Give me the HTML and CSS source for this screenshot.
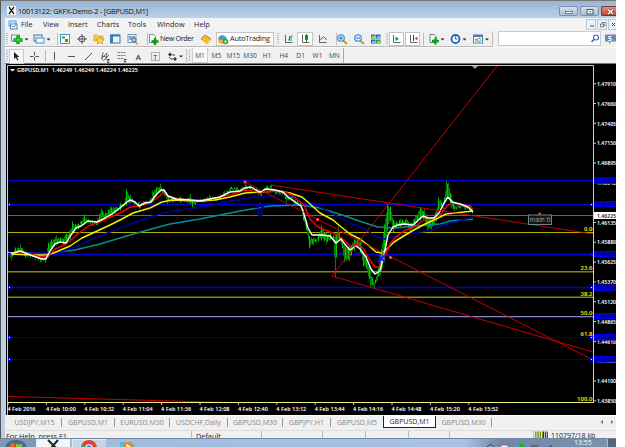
FILE: index.html
```html
<!DOCTYPE html>
<html lang="en">
<head>
    <meta charset="UTF-8">
    <title>10013122: GKFX-Demo-2 - [GBPUSD,M1]</title>
    <link rel="stylesheet" href="styles.css">
</head>
<body>
<div class="screen">
    <div class="window">
        <div class="titlebar">
            <svg class="app-icon" width="9" height="9" viewBox="0 0 9 9"><rect width="9" height="9" fill="#f4f6f8"/><path d="M2 1L7 8M7 1L2 8" stroke="#222" stroke-width="1.3"/></svg>
            <span class="title">10013122: GKFX-Demo-2 - [GBPUSD,M1]</span>
            <div class="win-buttons">
                <span class="wb"><svg width="17" height="9"><rect x="5.5" y="4.500" width="7" height="2" fill="#fff" stroke="#566" stroke-width=".8"/></svg></span>
                <span class="wb"><svg width="17" height="9"><rect x="6" y="2.500" width="6" height="4.500" fill="#fff" stroke="#456" /><path d="M8 4.700h2" stroke="#456"/></svg></span>
                <span class="wb close"><svg width="15" height="9"><path d="M6 2.500l5 4.500M11 2.500L6 7" stroke="#544" stroke-width="2.600"/><path d="M6 2.500l5 4.500M11 2.500L6 7" stroke="#fff" stroke-width="1.500"/></svg></span>
            </div>
        </div>

        <div class="menubar">
            <svg class="menu-icon" width="10" height="10" viewBox="0 0 10 10"><rect x="1" y="1" width="7" height="5" fill="#cfe6f8" stroke="#5c9fd0"/><rect x="2.500" y="4" width="6.500" height="5" fill="#e8f4fc" stroke="#4a90c8"/><path d="M4 7l1-1 1 1 2-2" stroke="#37a" fill="none" stroke-width=".7"/></svg>
            <span class="m-file">File</span><span class="m-view">View</span><span class="m-insert">Insert</span><span class="m-charts">Charts</span><span class="m-tools">Tools</span><span class="m-window">Window</span><span class="m-help">Help</span>
            <div class="mdi">
                <span><svg width="9" height="9"><path d="M3 6h4" stroke="#456"/></svg></span>
                <span><svg width="9" height="9"><path d="M4 3.500v-1h3v3h-1M2.500 4h3v3h-3z" stroke="#567" fill="none" stroke-width=".8"/></svg></span>
                <span><svg width="9" height="9"><path d="M3 3l3 3M6 3L3 6" stroke="#345"/></svg></span>
            </div>
        </div>

        <div class="toolbar">
            <!-- standard toolbar -->
            <svg width="492" height="16" viewBox="5 31 492 16" class="tools">
                <path d="M5 46.500h487.500v-15" fill="none" stroke="#bbb"/>
                <g stroke="#aaa" stroke-width="1.500" stroke-dasharray="1 1"><path d="M7 33v12M278 33v12M387 33v12"/></g>
                <path d="M57.500 33v12M147.500 33v12M336.500 33v12M423.500 33v12" stroke="#bbb"/>
                <g fill="#fff" stroke="#c4c4c4"><rect x="216.500" y="32.500" width="57" height="13"/><rect x="297.500" y="32.500" width="15" height="13"/><rect x="389.500" y="32.500" width="14" height="13"/><rect x="405.500" y="32.500" width="14" height="13"/></g>
                <path d="M24.500 38.500h4l-2 2zM46.500 38.500h4l-2 2zM440.500 38.500h4l-2 2zM462.500 38.500h4l-2 2zM485 38.500h4l-2 2z" fill="#222"/>
                <!-- new chart -->
                <rect x="11.500" y="35" width="8" height="6" fill="#e4f0fa" stroke="#688fb0"/><path d="M18 35.500v8.500M13.500 40h9" stroke="#0a8a1a" stroke-width="3.400"/><path d="M18 36.500v6.500M14.500 40h7" stroke="#22d42c" stroke-width="1.800"/>
                <!-- profiles -->
                <rect x="34" y="35" width="8" height="6" fill="#dcecf9" stroke="#3a7ab8"/><rect x="36" y="38" width="8" height="5" fill="#f5faff" stroke="#4a8ac8"/>
                <!-- market watch -->
                <rect x="60.500" y="34.500" width="9" height="9" fill="#f7fbff" stroke="#4593d0"/><path d="M62 36.500h3v2h-3z" fill="#2a2"/><path d="M65 39h3v3h-3z" fill="#e43"/>
                <!-- data window -->
                <g stroke="#555" fill="none"><circle cx="82" cy="39" r="3"/><path d="M82 34v10M77 39h10"/></g>
                <!-- navigator -->
                <path d="M94 35h3l1 1h5v5h-9z" fill="#f4ce57" stroke="#c89826" stroke-width=".7"/><path d="M100 36.500l1.200 2.500 3 .2-2.200 2 .7 2.800-2.700-1.500-2.700 1.500.7-2.800-2.200-2 3-.2z" fill="#ffe03a" stroke="#b87f10" stroke-width=".6"/>
                <!-- terminal, tester -->
                <rect x="110.500" y="35" width="9.500" height="8" fill="#e8f3fc" stroke="#3a7ab8"/><path d="M111 35.500h9M112 36v7" stroke="#3a7ab8" stroke-width="2"/>
                <rect x="128" y="34.500" width="8" height="8" fill="#eaf4fc" stroke="#6a96bc"/><path d="M130 36v4M132 36v4M134 36v4" stroke="#458"/><circle cx="134" cy="40" r="2" fill="#bfe0f6" stroke="#458"/><path d="M135 42l3 2.500" stroke="#c93" stroke-width="1.500"/>
                <!-- new order -->
                <path d="M149.500 34.500h4l2 2v6h-6z" fill="#fff" stroke="#888"/><path d="M155 38v7M151.500 41.500h7" stroke="#0a9a1a" stroke-width="2.500"/>
                <text x="160" y="41.300" class="tb" textLength="34">New Order</text>
                <path d="M201 39l4-4 6 4-4 5z" fill="#f3bb2f" stroke="#a9700c" stroke-width=".8"/><path d="M201.500 40l5 4 4-4.500" fill="none" stroke="#fff0a0"/>
                <!-- autotrading -->
                <circle cx="222" cy="40" r="4" fill="#e5b83c"/><path d="M218 38q4-6 9 0l-2 2h-5z" fill="#4a9bd0"/><circle cx="225.500" cy="41.500" r="2.800" fill="#20b030"/><path d="M224.700 40v3l2.300-1.500z" fill="#fff"/>
                <text x="230" y="41.300" class="tb" textLength="40">AutoTrading</text>
                <!-- chart types -->
                <g stroke="#555" fill="none" stroke-width=".9"><path d="M285.500 35v7.500h7M302.500 34.500v8h7M319.500 35v7.500h7M393.500 35v7.500h7M410.500 35v7.500h7"/></g>
                <g stroke="#16942a" fill="none"><path d="M288 40h1.500v-4M291 41v-5h1.500M320.500 40q3-6 6 0"/><path d="M306.500 34v8" /><path d="M306.500 35v5" stroke-width="3"/></g>
                <!-- zoom and tile -->
                <path d="M343.500 41l3.500 3M360.500 41l3.500 3" stroke="#c99c27" stroke-width="2"/><g fill="#d9efff" stroke="#3187c8" stroke-width="1.100"><circle cx="341" cy="38" r="3.300"/><circle cx="358" cy="38" r="3.300"/></g><path d="M339 38h4M341 36v4M356 38h4" stroke="#2570b0"/>
                <path d="M371 34.500h4.500v4H371zM376 39.500h4.500v4H376z" fill="#2a9b2a"/><path d="M376 34.500h4.500v4H376zM371 39.500h4.500v4H371z" fill="#2b65cc"/><path d="M372 37h3M377 37h3M372 42h3M377 42h3" stroke="#fff"/>
                <path d="M395.500 36.500v4.500l3.500-2.200z" fill="#16a030"/><path d="M413.500 35v6" stroke="#246"/><path d="M417.500 36.500l-3 2 3 2z" fill="#d44a1c"/>
                <!-- indicators, periods, templates -->
                <path d="M430 34.500h4l2 2v6h-6z" fill="#fff" stroke="#777"/><path d="M435.500 37.500v7M432 41h7" stroke="#0ca01c" stroke-width="2.300"/>
                <circle cx="455.500" cy="39" r="4" fill="#f5fbff" stroke="#1767bb" stroke-width="1.800"/><path d="M455.500 36.500V39h2" stroke="#333" fill="none" stroke-width=".8"/>
                <rect x="473.500" y="35" width="9" height="8" fill="#f7fbff" stroke="#3c83bd"/><path d="M473.500 36h9" stroke="#3c83bd" stroke-width="2"/><path d="M475 39l2 1 2-2 2 1" stroke="#c33" fill="none" stroke-width=".8"/><path d="M475 41.500l2-1 2 1 2-1" stroke="#292" fill="none" stroke-width=".8"/>
            </svg>
            <div class="search"><svg width="10" height="10"><circle cx="6" cy="3.500" r="2.500" fill="#fff" stroke="#3464c8" stroke-width="1.100"/><path d="M4 5.500L1.500 8" stroke="#3464c8" stroke-width="1.600"/></svg></div>
            <div class="chat"><svg width="11" height="12"><path d="M0 1.500h11v7H6l-2 2.500v-2.500H0z" fill="#7085b5"/><text x="3" y="8" fill="#fff" font-size="7" font-weight="bold">5</text></svg></div>
        </div>

        <div class="toolbar second">
            <!-- line studies -->
            <svg width="187" height="16" viewBox="5 47 187 16">
                <path d="M7 49v12M189.500 49v12" stroke="#aaa" stroke-width="1.500" stroke-dasharray="1 1"/>
                <path d="M45.500 49v12M186.500 48v15" stroke="#bbb"/>
                <rect x="9.500" y="48.500" width="14" height="14" fill="#f8f8f8" stroke="#ccc"/>
                <path d="M14 51v7l1.800-1.500 1.400 3 1.200-.6-1.400-2.800h2.400z" fill="#222"/>
                <g stroke="#555" fill="none"><path d="M34.500 51v3.500M34.500 56v3.500M30 55.500h3.500M35.500 55.500h3.500M54.500 51v8M68 55.500h7M85 59l7-7"/><path d="M101 58l6-6M103 60l6-6M101 55l6 1M103 51l-1 8M107 52l-1 7" stroke-width=".8"/><path d="M117.500 51.500h8M117.500 54.500h8M117.500 57.500h6" stroke-dasharray="1 .7"/></g>
                <text x="107" y="61.500" font-size="4.500" font-weight="bold">E</text><text x="124" y="61.500" font-size="4.500" font-weight="bold">F</text>
                <text x="135.800" y="58.500" font-size="8" fill="#333" stroke="#333" stroke-width=".2">A</text>
                <rect x="151.500" y="51.500" width="8" height="8" fill="none" stroke="#777" stroke-dasharray="1 1"/><text x="153.200" y="58.500" font-size="7" fill="#333">T</text>
                <path d="M168 53.500l2-2 2 2-2 2zM173 58l2-2 2 2-2 2z" fill="#333"/><path d="M172 54h3M169 56l2 2h2" stroke="#444" fill="none"/>
                <path d="M179 54.500h4l-2 2z" fill="#222"/>
            </svg>
            <div class="periods">
                <span class="on">M1</span><span>M5</span><span>M15</span><span>M30</span><span>H1</span><span>H4</span><span>D1</span><span>W1</span><span>MN</span>
            </div>
        </div>

        <svg id="chart" width="610" height="351" viewBox="6 64 610 351">
            <rect x="6" y="64" width="610" height="351" fill="#000"/>
            <path d="M7.500 415V65.500H593.500V403" stroke="#c8ccd0" fill="none"/>
            <!-- horizontal levels -->
            <path d="M8 232.500H593" stroke="#b8b000"/>
            <path d="M8 271.800H593M8 297.200H593" stroke="#8a8400" stroke-width="1.500"/>
            <path d="M8 316.600H593" stroke="#8585cd" stroke-width="1.300"/>
            <path d="M8 337.500H593M8 359.500H593" stroke="#000078"/>
            <path d="M8 215.500H593" stroke="#5b6676"/>
            <g stroke="#0000d0" stroke-width="1.300"><path d="M8 180.500H593M8 204.500H593M8 287.500H593"/><path d="M8 254.300H593" stroke-width="1.700"/></g>
            <g id="candles"></g>
            <g fill="none" stroke-width="1.400" stroke-linejoin="round">
                <polyline stroke="#009090" points="8,253 50,253 75,250 100,244 130,235 155,228 170,224 200,219 240,211 270,206 300,205 320,208 345,216 365,223 378,227 395,228 415,226 440,224 450,221 473,219"/>
                <polyline stroke="#0000a0" points="8,254 60,252 75,247 90,240 110,232 130,224 150,217 163,213 180,210 209,206 230,201 255,197 280,195 300,197 320,207 335,215 350,223 365,229 375,236 385,239 395,236 410,233 430,231 445,225 473,217"/>
                <polyline stroke="#f4f000" stroke-width="1.500" points="8,254 35,255 48,255 56,252 70,246 82,238 95,232 110,225 122,219 133,213 150,208 162,202 172,200 200,201 215,200 230,197 245,193 260,192 278,191 290,193 302,197 310,204 320,213 333,220 340,226 350,234 360,239 368,245 376,252 382,253 388,248 394,242 402,237 412,231 425,224 436,219 446,214 455,213 473,211"/>
                <polyline stroke="#f00000" stroke-width="1.500" points="8,254 20,252 30,254 40,257 48,256 55,249 62,246 70,241 80,232 90,225 100,222 110,217 120,213 130,207 140,206 150,203 157,198 163,193 170,197 178,199 195,200 205,200 215,198 230,195 245,190 260,192 275,191 285,192 292,195 298,200 304,205 310,219 318,227 330,232 338,235 344,240 350,246 357,244 363,248 369,259 375,267 380,267 384,258 390,244 396,237 404,231 414,227 424,220 432,219 440,215 447,206 452,203 460,204 470,206 473,209"/>
                <polyline stroke="#fff" points="8,253 14,253 20,251 28,254 36,257 42,259 46,259 50,251 55,244 60,242 66,243 71,235 76,228 81,226 88,221 97,222 105,218 112,214 120,208 127,202 130,200 135,202 139,206 145,203 151,202 156,195 161,190 164,190 168,196 176,199 190,200 200,201 210,199 220,197 230,192 240,191 245,188 251,187 256,190 260,192 266,189 275,190 283,192 288,197 295,202 301,206 304,214 308,228 312,235 322,235 330,236 336,243 341,239 344,243 350,250 356,246 360,249 366,257 371,269 375,274 380,271 385,250 388,235 393,227 398,225 404,224 413,225 423,216 428,218 434,218 439,213 444,203 448,197 452,202 460,204 468,207 473,212"/>
            </g>
            <!-- trend lines -->
            <g stroke="#dc0000" stroke-width=".9"><path d="M332 276L497 66M245 182L391 257L593 360M271 185L593 234M332 276L593 352M8 396.500L228 402.500" fill="none"/></g>
            <!-- objects -->
            <path d="M258.500 215.500v-8h-2.500l4-5 4 5h-2.500v8z" fill="none" stroke="#0000c0" stroke-width="1.300"/>
            <path d="M378 255l7 7M385 255l-7 7" stroke="#0020e8" stroke-width="2"/>
            <circle cx="359.500" cy="244.500" r="1.500" fill="none" stroke="#666"/>
            <g fill="#fff" stroke="#e02020"><rect x="244" y="181" width="2" height="2"/><rect x="316.500" y="218.500" width="2" height="2"/><rect x="389.500" y="256.500" width="2" height="2"/><rect x="539" y="213" width="1.500" height="1.500"/></g>
            <g id="handles" fill="#fff" stroke="#0000f0"></g>
            <rect x="528.500" y="215" width="23" height="9.500" fill="#10151a" stroke="#708090"/>
            <text x="529.500" y="222.300" fill="#9aa6b2" font-size="7.200" textLength="21" lengthAdjust="spacingAndGlyphs">main tl</text>
            <path d="M472 66h6l-3 3z" fill="#93a8bc"/>
            <path d="M8 402.500H593" stroke="#eeee80"/>
            <path d="M10 69h5l-2.500 2.500z" fill="#fff"/>
            <text x="17" y="72.300" class="axis" textLength="121" lengthAdjust="spacingAndGlyphs">GBPUSD,M1&#160; 1.46249 1.46249 1.46224 1.46225</text>
            <g class="fib" text-anchor="end"><text x="592.500" y="231">0.0</text><text x="592.500" y="270.300">23.6</text><text x="592.500" y="295.500">38.2</text><text x="592.500" y="315.300">50.0</text><text x="592.500" y="335.800">61.8</text><text x="592.500" y="401">100.0</text></g>
            <g id="prices" class="axis"></g>
            <g id="times" class="axis"></g>
        </svg>

        <div class="tabs">
            <span class="t1">USDJPY,M15</span><span class="t2">GBPUSD,M1</span><span class="t3">EURUSD,M30</span><span class="t4">USDCHF,Daily</span><span class="t5">GBPUSD,M30</span><span class="t6">GBPJPY,H1</span><span class="t7">GBPUSD,M5</span><span class="t8 active">GBPUSD,M1</span><span class="t9">GBPUSD,M30</span>
            <svg width="18" height="8" class="scroll"><path d="M5 2v4L2.500 4zM13 2v4l2.500-2z" fill="#777"/></svg>
        </div>

        <div class="status">
            <span class="help">For Help, press F1</span><span class="profile">Default</span><span class="c1"></span><span class="c2"></span><span class="c3"></span><span class="c4"></span><span class="c5"></span>
            <span class="conn"><svg width="15" height="7"><path d="M1 4h8" stroke="#7c9a26" stroke-width="7" stroke-dasharray="1.500 .8"/><path d="M9 4h5" stroke="#234" stroke-width="7" stroke-dasharray="1.200 .9"/></svg>110797/18 kb</span>
        </div>
    </div>

    <div class="taskbar">
        <div class="start"><svg width="36" height="9"><ellipse cx="16" cy="9" rx="11" ry="8" fill="#426d8c"/><path d="M10 5q3-2 5-.500v4h-5z" fill="#e8652c"/><path d="M16 4.500q3 1.500 6 .500v4h-6z" fill="#8ec33c"/></svg></div>
        <div class="task open"><svg width="16" height="9"><path d="M3 1l9 9M13 1L6 9" stroke="#222" stroke-width="2"/></svg></div>
        <div class="task"><svg width="18" height="9"><circle cx="9" cy="9" r="8" fill="#de4435"/><path d="M1 9a8 8 0 0 1 1-4l5 4z" fill="#3aa64c"/><circle cx="9" cy="9" r="3.800" fill="#fff"/><circle cx="9" cy="9" r="2.800" fill="#4285d4"/></svg></div>
        <svg class="player" width="16" height="9"><path d="M0 3h11l4 3v3H0z" fill="#65b2e4"/><circle cx="8" cy="8" r="5" fill="#ee8b20"/><path d="M6.500 5v4l4-1.500z" fill="#fff"/></svg>
        <div class="tray">
            <svg width="78" height="9"><path d="M3 8q4-5 7 0" stroke="#445" fill="none"/><path d="M17 6h7v3h-7z" fill="#fff" stroke="#a4559a"/><path d="M35 5h5v4h-5z" fill="#17b62a"/><path d="M47 7h7M47 8.500h7M65 8l2-2v3" stroke="#445" fill="none"/></svg>
            <span class="clock">13:55</span>
            <span class="desk"></span>
        </div>
    </div>
</div>
<script src="chart.js"></script>
</body>
</html>
```

FILE: styles.css
```css
body {
    margin: 0;
    background: #fff;
    font-family: "Open Sans", "Noto Sans", sans-serif;
    font-size: 7.3px;
    color: #222;
    overflow: hidden;
}
svg {
    display: block;
    flex-shrink: 0;
}
.screen {
    width: 616px;
    height: 447px;
    display: flex;
    flex-direction: column;
    overflow: hidden;
}
.window {
    height: 438px;
    box-sizing: border-box;
    border-top: 1px solid #777;
    border-left: 1px solid #555;
    padding-left: 4px;
    background: #b9d0e9;
    overflow: hidden;
}
.titlebar {
    height: 17px;
    margin-left: -4px;
    padding-left: 6px;
    display: flex;
    align-items: center;
    background: linear-gradient(#9ab4d2, #b9d1ea);
}
.app-icon {
    margin-top: 2px;
}
.title {
    margin: 3px 0 0 2px;
    font-size: 7.3px;
    letter-spacing: -0.2px;
    color: #111;
}
.win-buttons {
    display: flex;
    gap: 2px;
    margin-left: auto;
    align-self: flex-start;
    padding-top: 5px;
}
.wb {
    height: 8px;
    width: 17px;
    border: 1px solid #7b91a8;
    border-radius: 2px;
    background: linear-gradient(#d3e0ee, #a9bfd6);
    overflow: hidden;
}
.wb.close {
    width: 14px;
    border-color: #7c352b;
    border-right: 0;
    border-radius: 2px 0 0 2px;
    background: linear-gradient(#dc9283, #c4452c);
}
.menubar {
    height: 13px;
    display: flex;
    align-items: center;
    background: #f3f3f3;
    padding-left: 3px;
    color: #302030;
}
.menubar > span {
    line-height: 12px;
    height: 13px;
}
.menu-icon {
    margin-right: 3px;
}
.m-file { width: 22px; }
.m-view { width: 25px; }
.m-insert { width: 29px; }
.m-charts { width: 31px; }
.m-tools { width: 29px; }
.m-window { width: 37px; }
.mdi {
    margin-left: auto;
    display: flex;
    gap: 1px;
}
.mdi span {
    width: 8px;
    height: 9px;
    border: 1px solid #b6c8da;
    background: #eaf2fa;
    overflow: hidden;
}
.mdi span:last-child {
    width: 7px;
    border-right: 0;
}
.toolbar {
    height: 16px;
    display: flex;
    background: #f0f0f0;
}
.toolbar.second {
    height: 15px;
    border-top: 1px solid #fafafa;
    border-bottom: 1px solid #777;
}
.tb {
    font-size: 7.3px;
    fill: #201828;
}
.search {
    width: 102px;
    height: 13px;
    margin: 0 0 0 1px;
    border: 1px solid #ccc;
    background: #fff;
    display: flex;
    justify-content: flex-end;
    align-items: center;
}
.chat {
    padding: 2px 0 0 4px;
    overflow: hidden;
}
.periods {
    display: flex;
    border-right: 1px solid #aaa;
    color: #444;
    font-size: 6.6px;
}
.periods span {
    width: 16.85px;
    line-height: 15px;
    text-align: center;
}
.periods .on {
    width: 14px;
    border: 1px solid #ccc;
    border-top: 0;
    background: #f8f8f8;
}
#chart {
    margin-left: 1px;
}
.axis {
    fill: #fff;
    font-family: "Noto Sans", sans-serif;
    font-size: 6px;
    font-weight: 600;
}
.fib {
    fill: #f0f000;
    font-size: 6px;
    font-weight: 600;
    font-family: "Noto Sans", sans-serif;
}
.tabs {
    height: 15px;
    display: flex;
    align-items: flex-start;
    background: #f0f0f0;
    border-top: 1px solid #fff;
    box-sizing: border-box;
    color: #888;
    font-size: 7px;
}
.tabs span {
    box-sizing: border-box;
    height: 9px;
    margin-top: 2px;
    line-height: 9px;
    border-right: 1px solid #999;
    text-align: center;
    white-space: nowrap;
}
.t1 { width: 57px; padding-left: 3px; }
.t2 { width: 53px; }
.t3 { width: 55px; }
.t4 { width: 58px; }
.t5 { width: 55px; }
.t6 { width: 48px; }
.tabs .t7 { width: 52px; border: 0; }
.t9 { width: 56px; }
.tabs .active {
    width: 53px;
    height: 12px;
    margin-top: 0;
    line-height: 12px;
    background: #fff;
    border: 1px solid #222;
    border-top: 0;
    color: #322030;
}
.scroll {
    margin: 2px 0 0 auto;
}
.status {
    height: 9px;
    display: flex;
    background: #f0f0f0;
    border-top: 1px solid #ddd;
    white-space: nowrap;
    overflow: hidden;
    line-height: 10px;
}
.status > span {
    box-sizing: border-box;
    border-right: 1px solid #bbb;
    height: 11px;
}
.help { width: 187px; padding-left: 1px; }
.profile { width: 70px; padding-left: 4px; }
.c1 { width: 61px; }
.c2 { width: 43px; }
.c3 { width: 43px; }
.c4 { width: 41px; }
.c5 { width: 84px; }
.status .conn {
    display: flex;
    gap: 2px;
    padding-left: 0;
    border: 0;
    font-size: 7px;
}
.taskbar {
    height: 9px;
    display: flex;
    background: linear-gradient(90deg, #9fbadb 0, #a9c2e2 465px, #7188a4 500px, #7d91ab 616px);
    border-top: 1px solid #71879f;
    box-sizing: border-box;
}
.start {
    width: 36px;
    background: #8098ae;
}
.task {
    width: 34px;
    margin-right: 2px;
    display: flex;
    justify-content: center;
    background: #c6d5e7;
    box-shadow: inset 1px 1px #e6eef7;
}
.task.open {
    background: #f3f6f9;
}
.player {
    margin-left: 12px;
}
.tray {
    margin-left: auto;
    display: flex;
}
.clock {
    width: 45px;
    padding-left: 12px;
    box-sizing: border-box;
    color: #fff;
    font-size: 7px;
    line-height: 8px;
}
.desk {
    width: 8px;
    background: #52657c;
    border-left: 1px solid #a9b9cb;
}
```

FILE: chart.js
```javascript
const NS = "http://www.w3.org/2000/svg";

function add(parent, tag, attrs, text) {
    const el = document.createElementNS(NS, tag);
    for (const k in attrs) el.setAttribute(k, attrs[k]);
    if (text) {
        el.textContent = text;
        el.setAttribute("lengthAdjust", "spacingAndGlyphs");
    }
    document.getElementById(parent).appendChild(el);
}

// x, high, low
const range = [
    [8,252,256],[11,253,260],[15,248,254],[20,245,253],[25,251,258],[30,252,257],[35,254,260],[40,256,262],[45,256,262],
    [48,243,257],[51,240,249],[56,236,245],[60,238,243],[65,235,245],[70,230,240],[72,222,232],[78,224,229],[84,215,224],
    [88,219,223],[92,221,226],[97,219,225],[101,209,220],[105,213,219],[110,206,218],[115,207,213],[120,204,210],[124,202,206],
    [126,190,205],[130,195,203],[134,202,205],[139,202,209],[145,201,205],[150,199,203],[152,191,202],[156,188,196],
    [160,184,192],[164,190,196],[167,196,204],[172,198,202],[180,197,202],[187,198,203],[190,194,204],[192,200,207],
    [200,199,202],[205,198,202],[209,195,200],[217,197,200],[224,191,196],[230,187,192],[236,187,192],[241,188,192],
    [245,184,190],[250,186,190],[256,188,192],[260,192,196],[266,186,190],[271,185,190],[275,190,194],[282,191,195],
    [286,194,202],[290,193,200],[295,199,205],[300,202,206],[303,210,220],[306,222,230],[309,236,248],[313,238,245],
    [318,236,241],[321,226,240],[326,233,243],[330,233,240],[333,236,241],[335,235,277],[337,233,243],[338,227,240],
    [341,240,244],[344,245,262],[349,247,261],[354,240,250],[357,239,247],[360,242,252],[363,252,266],[366,255,268],
    [370,270,286],[374,283,288],[377,270,280],[380,255,275],[384,225,262],[387,205,230],[390,207,220],[393,220,232],
    [396,222,228],[400,219,227],[406,219,227],[410,223,232],[415,216,226],[420,208,220],[424,209,220],[427,217,230],
    [431,219,231],[436,210,221],[438,198,210],[443,203,209],[446,181,200],[448,183,196],[451,195,208],[454,205,211],
    [460,203,208],[465,205,209],[470,205,212],[473,208,216]
];

for (let i = 0; i < range.length - 1; i++) {
    const [x0, h0, l0] = range[i];
    const [x1, h1, l1] = range[i + 1];
    for (let x = x0; x < x1; x++) {
        const t = (x - x0) / (x1 - x0);
        const n = (x * 37 % 11) / 11;
        const hi = h0 + (h1 - h0) * t + (x > x0 ? n * 3 : -0.5);
        const lo = l0 + (l1 - l0) * t - (x > x0 ? (1 - n) * 3 : -0.5);
        add("candles", "path", { d: `M${x + 0.5} ${hi}V${Math.max(lo, hi + 2)}`, stroke: x % 3 ? "#008000" : "#00c400" });
    }
}

// price scale
["1.47910", "1.47660", "1.47405", "1.47150", "1.46895", "1.46640", "", "1.46135", "1.45880", "1.45625",
 "1.45370", "1.45120", "1.44865", "1.44610", "1.44355", "1.44100", "1.43850"].forEach((p, i) => {
    const y = 83.7 + i * 19.82;
    add("prices", "path", { d: `M593 ${y}h3`, stroke: "#ccc" });
    if (p) add("prices", "text", { x: 597, y: y + 2.2, textLength: 19 }, p);
});
[[180.3, "1.46672"], [204, "1.46367"], [254, "1.45728"], [287.5, "1.45304"], [316, "1.44931"], [337, "1.44667"], [359, "1.44387"]].forEach(([y, p]) => {
    add("prices", "rect", { x: 594, y: y - 3, width: 22, height: 6.5, fill: "#0000e8" });
    add("prices", "text", { x: 597, y: y + 2.2, textLength: 19, fill: "#000050" }, p);
});
add("prices", "rect", { x: 594, y: 212, width: 22, height: 7, fill: "#fff" });
add("prices", "text", { x: 597, y: 217.8, textLength: 19, fill: "#222" }, "1.46225");

// time scale
["4 Feb 2016", "4 Feb 10:00", "4 Feb 10:32", "4 Feb 11:04", "4 Feb 11:36", "4 Feb 12:08", "4 Feb 12:40",
 "4 Feb 13:12", "4 Feb 13:44", "4 Feb 14:16", "4 Feb 14:48", "4 Feb 15:20", "4 Feb 15:52"].forEach((t, i) => {
    const x = 7.5 + i * 38.4;
    add("times", "path", { d: `M${x + 0.5} 403v2`, stroke: "#ccc" });
    add("times", "text", { x: x, y: 410.5, textLength: i ? 30 : 28 }, t);
});

// level handles
[204.5, 254.3, 287.5, 337.5, 359.5].forEach(y => {
    add("handles", "rect", { x: 8.5, y: y - 1, width: 2, height: 2 });
    add("handles", "rect", { x: 590.5, y: y - 1, width: 2, height: 2 });
});
```
